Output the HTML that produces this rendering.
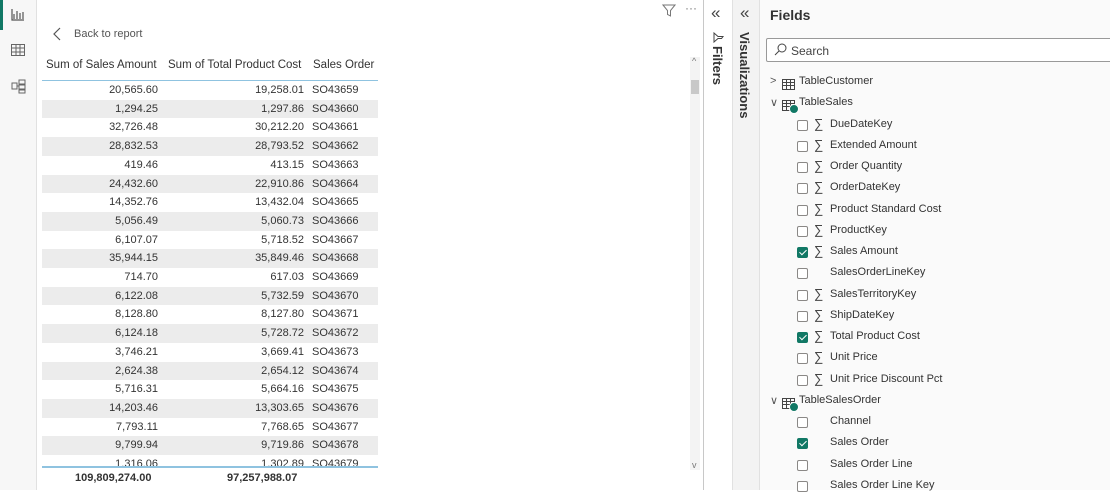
<!DOCTYPE html>
<html><head><meta charset="utf-8"><style>
*{margin:0;padding:0;box-sizing:border-box}
body{width:1110px;height:490px;overflow:hidden;background:#fff;font-family:"Liberation Sans",sans-serif;position:relative;color:#252423}
.abs{position:absolute}
.nav{left:0;top:0;width:37px;height:490px;background:#f7f7f7;border-right:1px solid #e1e1e1}
.canvas{left:37px;top:0;width:667px;height:490px;background:#fff;border-right:1px solid #c8c8c8}
.t{font-size:11px;white-space:nowrap;color:#333}
.row{position:absolute;left:42px;width:336px;height:18.7px}
.row span{position:absolute;top:3px;font-size:11px;color:#333}
.c1{right:220px}.c2{right:74px}.c3{left:270px}
.filt{left:705px;top:0;width:28px;height:490px;background:#fff;border-right:1px solid #e1e1e1}
.vis{left:733px;top:0;width:27px;height:490px;background:#f3f3f3;border-right:1px solid #e1e1e1}
.fields{left:760px;top:0;width:350px;height:490px;background:#fafafa}
.f{position:absolute;font-size:11px;color:#333;white-space:nowrap}
.cb{position:absolute;width:11px;height:11px;border:1px solid #8a8886;border-radius:2px;background:#fff}
.cb.on{background:#117865;border-color:#117865}
.cb.on::after{content:"";position:absolute;left:3px;top:0px;width:3px;height:6px;border:solid #fff;border-width:0 1.5px 1.5px 0;transform:rotate(45deg)}
.sig{position:absolute;font-size:13px;color:#444}
.vert{writing-mode:vertical-rl;font-size:13px;font-weight:bold;color:#333}
</style></head><body>
<div class="abs nav">
 <div class="abs" style="left:0;top:0;width:3px;height:30px;background:#117865"></div>
 <svg class="abs" style="left:11px;top:9px" width="14" height="12" viewBox="0 0 14 12"><path d="M1 0v11h12M3 5v5M6 2v8M9 4v6M12 3v7" stroke="#555" fill="none" stroke-width="1.2"/></svg>
 <svg class="abs" style="left:11px;top:44px" width="14" height="12" viewBox="0 0 14 12"><rect x=".5" y=".5" width="13" height="11" fill="none" stroke="#666"/><path d="M.5 4h13M.5 8h13M5 .5v11M9 .5v11" stroke="#666"/></svg>
 <svg class="abs" style="left:11px;top:79px" width="15" height="15" viewBox="0 0 15 15"><path d="M1 4h5v6H1zM8 1h6v4H8zM8 6h6v4H8zM8 11h6v3H8zM6 7h2" stroke="#666" fill="none"/></svg>
</div>
<div class="abs canvas"></div>
<svg class="abs" style="left:53px;top:27px" width="8" height="14" viewBox="0 0 8 14"><path d="M7 1L1 7l6 6" stroke="#555" fill="none" stroke-width="1.2"/></svg>
<div class="abs t" style="left:74px;top:28px;color:#555">Back to report</div>
<div class="abs t" style="left:46px;top:59px;font-size:11.5px">Sum of Sales Amount</div>
<div class="abs t" style="left:168px;top:59px;font-size:11.5px">Sum of Total Product Cost</div>
<div class="abs t" style="left:313px;top:59px;font-size:11.5px">Sales Order</div>
<div class="abs" style="left:42px;top:80px;width:336px;height:1px;background:#8fc3e0"></div>
<div id="rows"></div>
<div class="abs" style="left:42px;top:466px;width:336px;height:2px;background:#8fc3e0"></div>
<div class="abs" style="left:42px;top:468px;width:336px;height:22px;background:#fff"></div>
<div class="abs t" style="left:75px;top:472px;font-weight:bold">109,809,274.00</div>
<div class="abs t" style="left:227px;top:472px;font-weight:bold">97,257,988.07</div>
<div class="abs" style="left:690px;top:57px;width:10px;height:413px;background:#f3f3f3"></div>
<div class="abs" style="left:691px;top:80px;width:8px;height:14px;background:#c8c8c8"></div>
<div class="abs t" style="left:692px;top:56px;font-size:9px;color:#777">^</div>
<div class="abs t" style="left:692px;top:460px;font-size:9px;color:#777">v</div>
<svg class="abs" style="left:662px;top:4px" width="14" height="13" viewBox="0 0 14 13"><path d="M1 1h12L8.5 6.5V12L5.5 10.5V6.5z" stroke="#777" fill="none"/></svg>
<div class="abs t" style="left:685px;top:1px;color:#777;font-size:12px">···</div>
<div class="abs filt"></div>
<div class="abs t" style="left:711px;top:3px;font-size:17px;color:#444">«</div>
<svg class="abs" style="left:713px;top:32px" width="11" height="11" viewBox="0 0 11 11"><path d="M1 1h9L6.5 5v5L4.5 8.5V5z" stroke="#444" fill="none" transform="rotate(-90 5.5 5.5)"/></svg>
<div class="abs vert" style="left:710px;top:46px">Filters</div>
<div class="abs vis"></div>
<div class="abs t" style="left:740px;top:3px;font-size:17px;color:#444">«</div>
<div class="abs vert" style="left:737px;top:32px">Visualizations</div>
<div class="abs fields"></div>
<div class="abs" style="left:770px;top:7px;font-size:14px;font-weight:bold;color:#333">Fields</div>
<div class="abs" style="left:766px;top:38px;width:350px;height:24px;border:1px solid #999;border-radius:2px;background:#fff"></div>
<svg class="abs" style="left:774px;top:43px" width="13" height="13" viewBox="0 0 13 13"><circle cx="8" cy="5" r="4" stroke="#444" fill="none"/><path d="M5 8l-4 4" stroke="#444"/></svg>
<div class="abs" style="left:791px;top:44px;font-size:12px;color:#444">Search</div>
<div id="fl"></div>
<script>
var d=[["20,565.60","19,258.01","SO43659"],["1,294.25","1,297.86","SO43660"],["32,726.48","30,212.20","SO43661"],["28,832.53","28,793.52","SO43662"],["419.46","413.15","SO43663"],["24,432.60","22,910.86","SO43664"],["14,352.76","13,432.04","SO43665"],["5,056.49","5,060.73","SO43666"],["6,107.07","5,718.52","SO43667"],["35,944.15","35,849.46","SO43668"],["714.70","617.03","SO43669"],["6,122.08","5,732.59","SO43670"],["8,128.80","8,127.80","SO43671"],["6,124.18","5,728.72","SO43672"],["3,746.21","3,669.41","SO43673"],["2,624.38","2,654.12","SO43674"],["5,716.31","5,664.16","SO43675"],["14,203.46","13,303.65","SO43676"],["7,793.11","7,768.65","SO43677"],["9,799.94","9,719.86","SO43678"],["1,316.06","1,302.89","SO43679"]];
var h="";d.forEach(function(r,i){var y=81+i*18.7;if(y>466)return;h+='<div class="row" style="top:'+y+'px;background:'+(i%2?'#ececec':'#fff')+'"><span class="c1">'+r[0]+'</span><span class="c2">'+r[1]+'</span><span class="c3">'+r[2]+'</span></div>';});
document.getElementById("rows").innerHTML=h;
var tbl='<svg width="13" height="11" viewBox="0 0 13 11"><rect x=".5" y=".5" width="12" height="10" fill="none" stroke="#444"/><path d="M.5 3.5h12M.5 6.5h12M4.5 .5v10M8.5 .5v10" stroke="#444"/></svg>';
var f=[["t","TableCustomer",">"],["t","TableSales","v",1],["c","DueDateKey"],["c","Extended Amount"],["c","Order Quantity"],["c","OrderDateKey"],["c","Product Standard Cost"],["c","ProductKey"],["c","Sales Amount",1],["n","SalesOrderLineKey"],["c","SalesTerritoryKey"],["c","ShipDateKey"],["c","Total Product Cost",1],["c","Unit Price"],["c","Unit Price Discount Pct"],["t","TableSalesOrder","v",1],["n","Channel"],["n","Sales Order",1],["n","Sales Order Line"],["n","Sales Order Line Key"]];
h="";f.forEach(function(it,i){var y=82+i*21.25;
if(it[0]=="t"){h+='<div class="f" style="left:770px;top:'+(y-7)+'px;font-size:11px;color:#555">'+(it[2]==">"?"&gt;":"&#8744;")+'</div><div class="abs" style="left:782px;top:'+(y-5)+'px">'+tbl+'</div>';
if(it[3])h+='<div class="abs" style="left:789px;top:'+(y+1)+'px;width:10px;height:10px;border-radius:50%;background:#117865;border:1px solid #fff"></div>';
h+='<div class="f" style="left:799px;top:'+(y-7)+'px">'+it[1]+'</div>';}
else{h+='<div class="cb'+(it[2]?' on':'')+'" style="left:797px;top:'+(y-5)+'px"></div>';
if(it[0]=="c")h+='<div class="sig" style="left:814px;top:'+(y-9)+'px">&sum;</div>';
h+='<div class="f" style="left:830px;top:'+(y-7)+'px">'+it[1]+'</div>';}});
document.getElementById("fl").innerHTML=h;
</script>
</body></html>
